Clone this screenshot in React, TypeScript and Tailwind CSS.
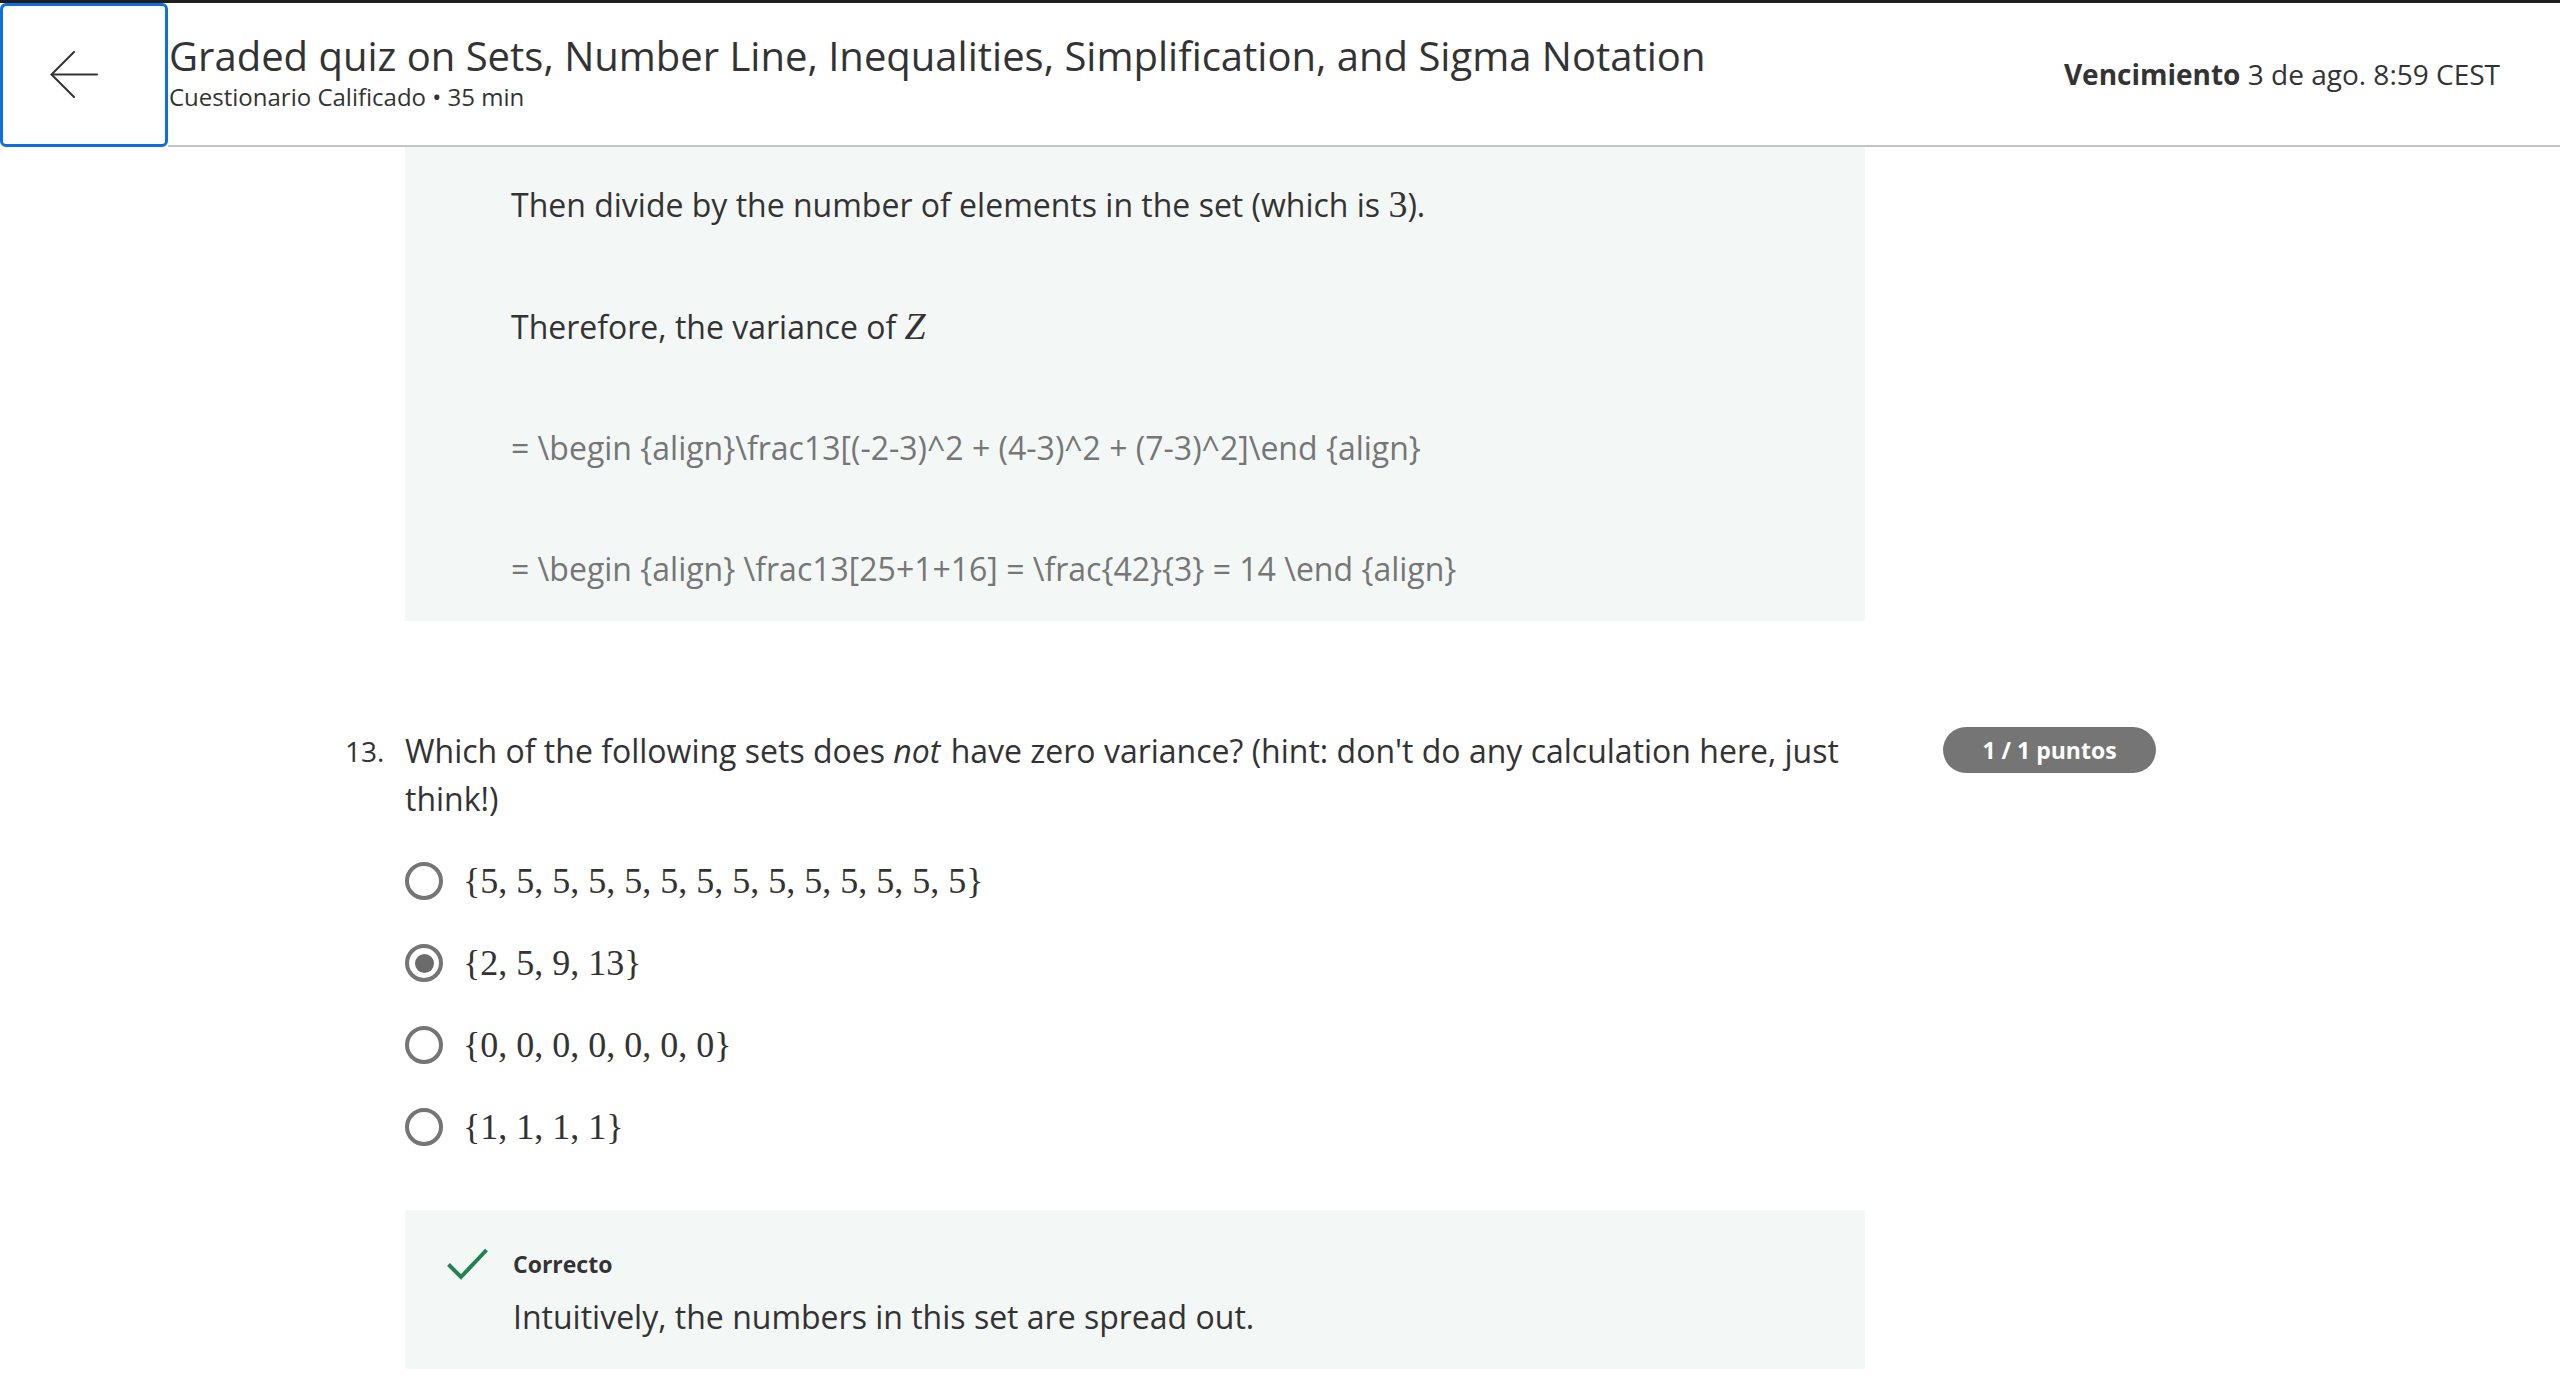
import React from 'react'

const sans = "font-['Open_Sans',sans-serif]"
const serif = "font-['Liberation_Serif',serif]"

function BackArrow() {
  return (
    <svg width="48" height="48" viewBox="0 0 48 48" fill="none" stroke="#333" strokeWidth="2" strokeLinecap="round">
      <path d="M2 23.5h45" />
      <path d="M24 1L1.5 23.5 24 46" />
    </svg>
  )
}

function Radio({ checked }: { checked?: boolean }) {
  return (
    <span className="flex h-[38px] w-[38px] shrink-0 items-center justify-center rounded-full border-[4px] border-[#757575]">
      {checked && <span className="h-[19px] w-[19px] rounded-full bg-[#6b6b6b]" />}
    </span>
  )
}

const options = [
  { label: '{5, 5, 5, 5, 5, 5, 5, 5, 5, 5, 5, 5, 5, 5}', checked: false },
  { label: '{2, 5, 9, 13}', checked: true },
  { label: '{0, 0, 0, 0, 0, 0, 0}', checked: false },
  { label: '{1, 1, 1, 1}', checked: false },
]

export default function App() {
  return (
    <div className={`min-h-[1394px] bg-white text-[#333] ${sans}`}>
      {/* header */}
      <header className="flex border-t-[3px] border-[#1f1f1f]">
        <button className="flex h-[144px] w-[168px] shrink-0 items-center justify-start rounded-md border-[3px] border-[#0f6fde] bg-white pl-[47px]">
          <BackArrow />
        </button>
        <div className="flex h-[144px] flex-1 items-center border-b-2 border-[#c4c4c4] pr-[60px]">
          <div className="flex-1 pl-[1px] pb-[3px]">
            <h1 className="text-[40px] leading-[46px] text-[#333]">
              Graded quiz on Sets, Number Line, Inequalities, Simplification, and Sigma Notation
            </h1>
            <p className="mt-[3px] text-[24px] leading-[30px] text-[#333]">Cuestionario Calificado • 35 min</p>
          </div>
          <div className="text-[28px]">
            <span className="font-bold">Vencimiento</span> 3 de ago. 8:59 CEST
          </div>
        </div>
      </header>

      <main className="pl-[345px]">
        {/* previous question feedback */}
        <div className="ml-[60px] w-[1460px] bg-[#f3f8f6] pt-[33px] pb-[28px] pl-[106px] text-[32px] leading-[48px]">
          <p className="mb-[73px]">
            Then divide by the number of elements in the set (which is <span className={`${serif} text-[38px]`}>3</span>).
          </p>
          <p className="mb-[73px]">
            Therefore, the variance of <span className={`${serif} text-[38px] italic`}>Z</span>
          </p>
          <p className="mb-[73px] text-[#767676]">
            = \begin {'{align}'}\frac13[(-2-3)^2 + (4-3)^2 + (7-3)^2]\end {'{align}'}
          </p>
          <p className="text-[#767676]">
            = \begin {'{align}'} \frac13[25+1+16] = \frac{'{42}'}{'{3}'} = 14 \end {'{align}'}
          </p>
        </div>

        {/* question 13 */}
        <div className="mt-[106px] flex">
          <div className="w-[58px] shrink-0 text-[28px] leading-[48px]">13.</div>
          <div className="ml-[2px] w-[1460px]">
            <p className="pr-[20px] text-[32px] leading-[48px]">
              Which of the following sets does <em className="pr-[2px]">not</em> have zero variance? (hint: don't do any calculation here, just think!)
            </p>
            <div className="mt-[17px]">
              {options.map((o) => (
                <label key={o.label} className="flex h-[82px] items-center gap-[20px]">
                  <Radio checked={o.checked} />
                  <span className={`${serif} text-[36px] text-[#333]`}>{o.label}</span>
                </label>
              ))}
            </div>
            <div className="mt-[42px] bg-[#f3f8f6] pt-[38px] pb-[28px]">
              <div className="flex items-center">
                <svg className="ml-[42px] mr-[25px]" width="41" height="32" viewBox="0 0 41 32" fill="none" stroke="#1f8354" strokeWidth="4">
                  <path d="M1.5 16.5L14 29 39.5 2" />
                </svg>
                <span className="text-[23px] font-bold leading-[32px]">Correcto</span>
              </div>
              <p className="mt-[13px] pl-[108px] text-[32px] leading-[48px]">
                Intuitively, the numbers in this set are spread out.
              </p>
            </div>
          </div>
          <div className="ml-[78px]">
            <span className="flex h-[46px] w-[213px] items-center justify-center rounded-full bg-[#757575] text-[23px] font-bold text-white">
              1 / 1 puntos
            </span>
          </div>
        </div>
      </main>
    </div>
  )
}
